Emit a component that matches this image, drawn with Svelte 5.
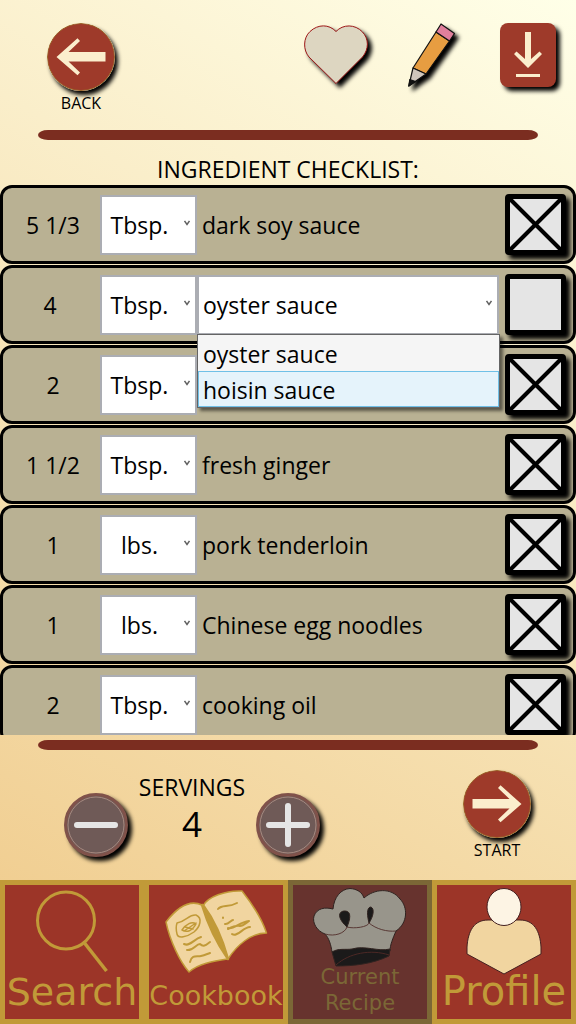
<script>
  const unitOptions = ['Tbsp.', 'lbs.'];

  let ingredients = $state([
    { qty: '5 1/3', unit: 'Tbsp.', name: 'dark soy sauce', checked: true },
    { qty: '4 ', unit: 'Tbsp.', name: 'oyster sauce', choices: ['oyster sauce', 'hoisin sauce'], checked: false },
    { qty: '2', unit: 'Tbsp.', name: '', checked: true },
    { qty: '1 1/2', unit: 'Tbsp.', name: 'fresh ginger', checked: true },
    { qty: '1', unit: 'lbs.', name: 'pork tenderloin', checked: true },
    { qty: '1', unit: 'lbs.', name: 'Chinese egg noodles', checked: true },
    { qty: '2', unit: 'Tbsp.', name: 'cooking oil', checked: true }
  ]);

  let openRow = $state(1);
  let highlighted = $state(1);
  let servings = $state(4);

  function choose(item, choice) {
    item.name = choice;
    openRow = -1;
  }
</script>

{#snippet chevron()}
  <svg class="chevron" viewBox="0 0 6 6" aria-hidden="true"><path d="M.5 1 3 4.500 5.500 1" /></svg>
{/snippet}

{#snippet arrow(right)}
  <svg class="round" class:flip={right} viewBox="0 0 68 68" aria-hidden="true">
    <circle cx="34" cy="34" r="33.500" fill="#9e3a2a" stroke="#9a6428" />
    <path d="M9.500 34 30.500 15.300 33 18 21.500 29H58.500V38.500H21.500L33 49.500 30.500 52.300Z" fill="#fbeecd" />
  </svg>
{/snippet}

<div class="page">
  <header>
    <button class="labelled">
      {@render arrow(false)}
      <span>BACK</span>
    </button>
    <div class="actions">
      <button aria-label="Favorite">
        <svg class="tool" viewBox="0 0 64 64" aria-hidden="true">
          <path d="M32 60.500 5 34C-1 27 -1 15 6 8.500 14 1 25 1 32 8.500 39 1 51 1 58.500 9 65 16 65 26 58.500 34Z" fill="#ddd6c1" stroke="#9c1515" />
        </svg>
      </button>
      <button aria-label="Edit">
        <svg class="tool" viewBox="0 0 64 64" aria-hidden="true">
          <g stroke="#111" stroke-width="1.200" stroke-linejoin="round">
            <path d="M13 45 36 9 49.500 18 26 51Z" fill="#e79d41" />
            <path d="M36 9 41 1 54.500 10.500 49.500 18Z" fill="#e07f9c" />
            <path d="M13 45 26 51 8.800 63Z" fill="#cfc6bc" />
            <path d="M9.800 56.500 15.500 58.500 8.800 63Z" fill="#111" />
          </g>
        </svg>
      </button>
      <button aria-label="Download">
        <svg class="tool" viewBox="0 0 64 64" aria-hidden="true">
          <rect x="4" width="56" height="64" rx="8" fill="#9e3a2a" />
          <path d="M29 9H35V36L43.500 28.500 46 31 32 45 18 31 20.500 28.500 29 36ZM20 51H44V54H20Z" fill="#fbeecd" />
        </svg>
      </button>
    </div>
  </header>

  <div class="bar"></div>
  <h1>INGREDIENT CHECKLIST:</h1>

  <ul class="list">
    {#each ingredients as item, i}
      <li class="row">
        <span class="qty">{item.qty}</span>
        <div class="field unit">
          <select aria-label="Unit" bind:value={item.unit}>
            {#each unitOptions as unit}
              <option>{unit}</option>
            {/each}
          </select>
          {@render chevron()}
        </div>
        {#if item.choices}
          <div class="field choice">
            <button
              class="combo"
              role="combobox"
              aria-label="Ingredient"
              aria-expanded={openRow === i}
              aria-controls="choices-{i}"
              onclick={() => (openRow = openRow === i ? -1 : i)}>{item.name}</button>
            {@render chevron()}
            {#if openRow === i}
              <div class="menu" id="choices-{i}" role="listbox">
                {#each item.choices as choice, c}
                  <button
                    role="option"
                    aria-selected={item.name === choice}
                    class:hot={highlighted === c}
                    onmouseenter={() => (highlighted = c)}
                    onclick={() => choose(item, choice)}>{choice}</button>
                {/each}
              </div>
            {/if}
          </div>
        {:else}
          <span class="name">{item.name}</span>
        {/if}
        <label class="tick">
          <input type="checkbox" aria-label={item.name || 'Ingredient'} bind:checked={item.checked} />
          <svg viewBox="0 0 50 50" aria-hidden="true"><path d="M0 0 50 50M50 0 0 50" /></svg>
        </label>
      </li>
    {/each}
  </ul>

  <section class="footer">
    <div class="bar"></div>
    <div class="controls">
      <button aria-label="Fewer servings" class="step" onclick={() => (servings = Math.max(1, servings - 1))}>
        <svg class="tool" viewBox="0 0 64 64" aria-hidden="true">
          <circle cx="32" cy="32" r="30.500" fill="#6f5a57" stroke="#80524a" stroke-width="3" />
          <circle cx="32" cy="32" r="28" fill="none" stroke="#b49489" stroke-width=".8" />
          <path d="M13 32H51" stroke="#e5e5e5" stroke-width="6" stroke-linecap="round" />
        </svg>
      </button>
      <div class="servings">
        <span>SERVINGS</span>
        <output>{servings}</output>
      </div>
      <button aria-label="More servings" class="step" onclick={() => (servings += 1)}>
        <svg class="tool" viewBox="0 0 64 64" aria-hidden="true">
          <circle cx="32" cy="32" r="30.500" fill="#6f5a57" stroke="#80524a" stroke-width="3" />
          <circle cx="32" cy="32" r="28" fill="none" stroke="#b49489" stroke-width=".8" />
          <path d="M13 32H51M32 13V51" stroke="#e5e5e5" stroke-width="6" stroke-linecap="round" />
        </svg>
      </button>
      <button class="labelled start">
        {@render arrow(true)}
        <span>START</span>
      </button>
    </div>
  </section>

  <nav>
    <button>
      <svg viewBox="0 0 134 134" aria-hidden="true" fill="none" stroke="#c19a38" stroke-width="3">
        <circle cx="61" cy="35.500" r="28.500" />
        <path d="M79.500 58 101.500 86" stroke-width="3.500" />
      </svg>
      <span class="search">Search</span>
    </button>
    <button>
      <svg viewBox="0 0 134 134" aria-hidden="true" fill="none" stroke="#c19a38" stroke-width="1.500" stroke-linecap="round" stroke-linejoin="round">
        <path d="M17 37C27 24 40 14 53 20L54 21C58 12 77 5 93 6 104 20 113 34 117.500 48 102 48 88 60 79 74 66 76 50 78 40 87 31 77 21 56 17 37Z" fill="#f1d5a0" />
        <path d="M53 20C59 40 69 60 79 74 74 56 66 36 54 20Z" fill="#c19a38" stroke-width="2.500" />
        <path d="M28 38C38 36 40 29 47 30 54 33 51 42 45 47 38 52 29 54 28 49 27 45 27 41 28 38ZM33 45C37 39 43 36 47 39 43 46 38 48 33 45ZM35 46 47 38M36 42 44 44" />
        <path d="M35 59C41 62 45 54 52 52M38 65C44 66 47 59 51 59 55 63 58 59 61 57M41 77C43 69 48 72 52 71 56 70 58 69 61 68M69 24C73 19 79 23 88 18M76 39C79 40 82 35 84 35M79 43C85 45 90 37 100 36M79 44C83 42 87 40 91 41 94 41 97 38 100 36M83 49C88 53 94 42 101 42M74 32.500V33" stroke-width="2" />
      </svg>
      <span class="cookbook">Cookbook</span>
    </button>
    <button class="current" disabled>
      <svg viewBox="0 0 134 134" aria-hidden="true" stroke="#302320" stroke-linejoin="round">
        <path d="M39 67C38 60 36 53 32 49 24 46 19 38 21 31 24 23 32 22 40 24 41 12 48 4 57 3.500 64 4 69 7 71 13 81 4 98 2 107 14 115 22 115 38 103 46 100 53 97 60 97 66Z" fill="#98958b" />
        <path d="M39 67C45 63 53 65 59 64 72 60 85 67 97 64L96 71C79 79 61 81 43 81Z" fill="#1b1a1a" />
        <path d="M43 80C56 68 78 64 96 70" fill="none" stroke="#4c2825" />
        <path d="M32 49C42 52 52 48 54 42 61 44 75 42 76 38 83 44 94 47 103 46" fill="none" stroke="#593935" />
        <path d="M54 42C44 33 45 26 52 26 59 26 57 35 54 42ZM76 38C73 26 75 22 78 22 82 24 80 32 76 38Z" fill="#1b1a1a" />
      </svg>
      <span class="recipe">Current<br />Recipe</span>
    </button>
    <button>
      <svg viewBox="0 0 134 134" aria-hidden="true" stroke="#442020">
        <path d="M30 69V62C31 46 37 35 51 35H83C97 35 103 46 104 62V69L67 89Z" fill="#f1d5a0" />
        <ellipse cx="67" cy="22" rx="17" ry="18.500" fill="#fdf4e4" />
      </svg>
      <span class="profile">Profile</span>
    </button>
  </nav>
</div>

<style>
  :global(body) {
    margin: 0;
  }

  .page {
    display: flex;
    flex-direction: column;
    height: 100vh;
    overflow: hidden;
    font-family: 'Open Sans', 'Noto Sans', sans-serif;
    font-size: 23px;
    color: #000;
    background: linear-gradient(30deg, #efc988, #ffffe8);
  }

  button {
    padding: 0;
    border: 0;
    background: none;
    color: inherit;
    font: inherit;
    cursor: pointer;
  }

  svg {
    display: block;
  }

  header {
    display: flex;
    justify-content: space-between;
    align-items: flex-start;
    flex: none;
    box-sizing: border-box;
    height: 130px;
    padding: 23px 0 0 47px;
  }

  .labelled {
    display: flex;
    flex-direction: column;
    align-items: center;
    width: 68px;
    font-size: 16px;
    line-height: 24px;
  }

  .round {
    width: 68px;
    height: 68px;
    border-radius: 50%;
    box-shadow: 3px 4px 4px #000;
  }

  .round.flip {
    transform: scaleX(-1);
    box-shadow: -3px 4px 4px #000;
  }

  .tool {
    width: 64px;
    height: 64px;
    filter: drop-shadow(4px 4px 2px #000);
  }

  .actions {
    display: grid;
    grid-template-columns: repeat(3, 96px);
    justify-items: center;
  }

  .bar {
    flex: none;
    height: 10px;
    margin: 0 38px;
    border-radius: 10px / 5px;
    background: #7b2d20;
  }

  h1 {
    flex: none;
    margin: 0;
    padding-top: 14px;
    font-size: 23px;
    font-weight: 400;
    line-height: 31px;
    text-align: center;
  }

  .list {
    display: flex;
    flex: 1;
    flex-direction: column;
    gap: 1px;
    min-height: 0;
    margin: 0;
    padding: 0;
    overflow-y: auto;
    scrollbar-width: none;
    list-style: none;
  }

  .row {
    display: flex;
    flex: none;
    align-items: center;
    box-sizing: border-box;
    height: 79px;
    padding: 0 7px 0 3px;
    border: 3px solid #000;
    border-radius: 12px;
    background: #b9b193;
  }

  .qty {
    flex: none;
    width: 94px;
    text-align: center;
    white-space: pre;
  }

  .field {
    position: relative;
    flex: none;
    height: 60px;
  }

  .unit {
    width: 97px;
  }

  .choice {
    flex: 1;
    margin-right: 6px;
  }

  select,
  .combo {
    box-sizing: border-box;
    width: 100%;
    height: 100%;
    margin: 0;
    border: 2px solid #abadb3;
    border-radius: 0;
    background: #fff;
    color: #000;
    font: inherit;
    appearance: none;
  }

  select {
    padding: 0 18px 0 0;
    text-align: center;
    text-align-last: center;
  }

  .combo {
    padding: 0 4px;
    text-align: left;
  }

  .chevron {
    position: absolute;
    top: 25px;
    right: 7px;
    width: 6px;
    height: 6px;
    fill: none;
    stroke: #606060;
    stroke-width: 1.5;
    pointer-events: none;
  }

  .menu {
    position: absolute;
    z-index: 2;
    top: 59px;
    right: -1px;
    left: 0;
    display: flex;
    flex-direction: column;
    border: 1px solid #646464;
    background: #f5f5f5;
    box-shadow: 3px 3px 3px rgb(0 0 0 / 50%);
  }

  .menu button {
    height: 36px;
    padding: 2px 4px 0;
    border: 1px solid #f5f5f5;
    text-align: left;
  }

  .menu .hot {
    border-color: #70c0e7;
    background: #e5f3fb;
  }

  .name {
    flex: 1;
    padding-left: 5px;
  }

  .tick {
    display: grid;
    flex: none;
    width: 61px;
    height: 61px;
  }

  .tick input {
    grid-area: 1 / 1;
    box-sizing: border-box;
    width: 61px;
    height: 61px;
    margin: 0;
    border: 5px solid #000;
    border-radius: 4px;
    background: #e5e5e5;
    box-shadow: 4px 4px 4px #000;
    appearance: none;
  }

  .tick svg {
    z-index: 1;
    grid-area: 1 / 1;
    place-self: center;
    width: 51px;
    height: 51px;
    fill: none;
    stroke: #000;
    stroke-width: 4;
    visibility: hidden;
    pointer-events: none;
  }

  .tick input:checked + svg {
    visibility: visible;
  }

  .footer {
    flex: none;
    box-sizing: border-box;
    height: 145px;
    padding-top: 5px;
  }

  .controls {
    display: flex;
    align-items: flex-start;
    padding: 20px 45px 0 64px;
  }

  .step {
    margin-top: 23px;
  }

  .servings {
    display: flex;
    flex-direction: column;
    align-items: center;
    width: 128px;
    line-height: 34px;
  }

  .servings output {
    font-size: 35px;
    line-height: 40px;
  }

  .start {
    margin-left: auto;
  }

  nav {
    display: grid;
    flex: none;
    grid-template-columns: repeat(4, 1fr);
    height: 144px;
  }

  nav button {
    display: grid;
    grid-template: 134px / 1fr;
    justify-items: center;
    border: 5px solid #c19a38;
    background: #9c3528;
    color: #c19a38;
    font-family: 'DejaVu Sans', sans-serif;
    white-space: nowrap;
  }

  nav svg {
    grid-area: 1 / 1;
    width: 134px;
    height: 134px;
  }

  nav span {
    grid-area: 1 / 1;
    align-self: end;
  }

  nav .current {
    border-color: #7b6736;
    background: #67332e;
    color: #7b6736;
  }

  .search {
    font-size: 38px;
    line-height: 54px;
  }

  .cookbook {
    font-size: 27px;
    line-height: 46px;
  }

  .recipe {
    font-size: 21px;
    line-height: 26px;
    padding-bottom: 3px;
  }

  .profile {
    font-size: 40px;
    line-height: 56px;
  }
</style>
